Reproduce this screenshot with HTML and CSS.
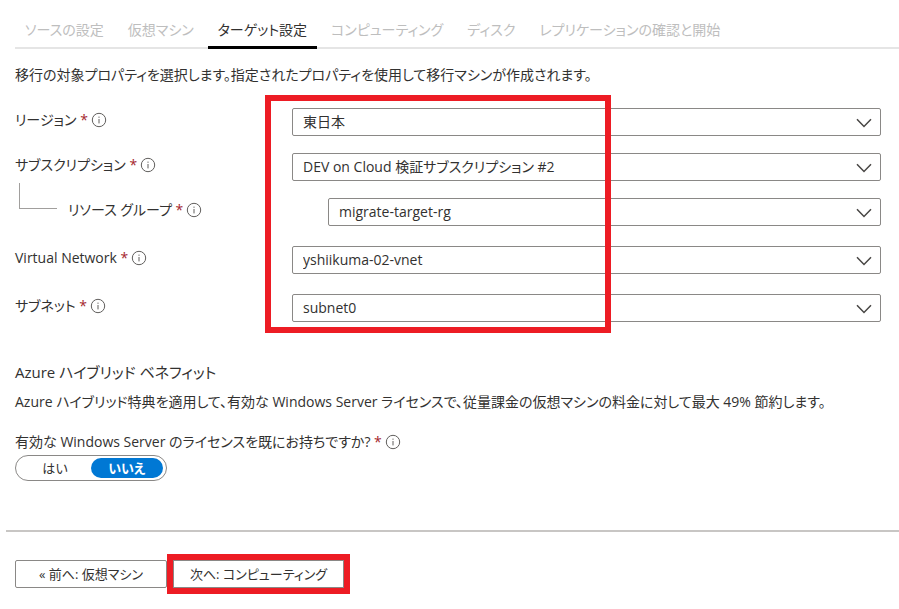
FILE: index.html
```html
<!DOCTYPE html>
<html lang="ja">
<head>
    <meta charset="UTF-8">
    <meta name="viewport" content="width=device-width, initial-scale=1.0">
    <title>ターゲット設定</title>
    <link rel="stylesheet" href="styles.css">
</head>
<body>

    <!-- Shared icons -->
    <svg class="icon-defs" aria-hidden="true">
        <symbol id="icon-info" viewBox="0 0 16 16">
            <circle cx="8" cy="8" r="6.7" fill="none" stroke="currentColor" stroke-width="1"/>
            <path d="M8 4.6v1.2M8 7v4.4" stroke="currentColor" stroke-width="1" fill="none"/>
        </symbol>
        <symbol id="icon-chevron" viewBox="0 0 16 16">
            <path d="M1 4.2l7 7.2 7-7.2" fill="none" stroke="currentColor" stroke-width="1.5"/>
        </symbol>
    </svg>

    <!-- Wizard steps -->
    <nav class="tabs">
        <button type="button" class="tab">ソースの設定</button>
        <button type="button" class="tab">仮想マシン</button>
        <button type="button" class="tab active" aria-current="step">ターゲット設定</button>
        <button type="button" class="tab">コンピューティング</button>
        <button type="button" class="tab">ディスク</button>
        <button type="button" class="tab">レプリケーションの確認と開始</button>
    </nav>

    <form class="content">
        <p class="intro">移行の対象プロパティを選択します。指定されたプロパティを使用して移行マシンが作成されます。</p>

        <!-- Target properties -->
        <div class="fields">
            <div class="field">
                <label class="field-label" for="region">リージョン <span class="required">*</span><svg class="info"><use href="#icon-info"/></svg></label>
                <div class="dropdown">
                    <select id="region"><option>東日本</option></select>
                    <svg class="chevron"><use href="#icon-chevron"/></svg>
                </div>
            </div>
            <div class="field">
                <label class="field-label" for="subscription">サブスクリプション <span class="required">*</span><svg class="info"><use href="#icon-info"/></svg></label>
                <div class="dropdown">
                    <select id="subscription"><option>DEV on Cloud 検証サブスクリプション #2</option></select>
                    <svg class="chevron"><use href="#icon-chevron"/></svg>
                </div>
            </div>
            <div class="field nested">
                <label class="field-label" for="resource-group"><span class="branch"></span>リソース グループ <span class="required">*</span><svg class="info"><use href="#icon-info"/></svg></label>
                <div class="dropdown">
                    <select id="resource-group"><option>migrate-target-rg</option></select>
                    <svg class="chevron"><use href="#icon-chevron"/></svg>
                </div>
            </div>
            <div class="field spaced">
                <label class="field-label" for="vnet">Virtual Network <span class="required">*</span><svg class="info"><use href="#icon-info"/></svg></label>
                <div class="dropdown">
                    <select id="vnet"><option>yshiikuma-02-vnet</option></select>
                    <svg class="chevron"><use href="#icon-chevron"/></svg>
                </div>
            </div>
            <div class="field spaced">
                <label class="field-label" for="subnet">サブネット <span class="required">*</span><svg class="info"><use href="#icon-info"/></svg></label>
                <div class="dropdown">
                    <select id="subnet"><option>subnet0</option></select>
                    <svg class="chevron"><use href="#icon-chevron"/></svg>
                </div>
            </div>
            <div class="callout"></div>
        </div>

        <!-- Azure Hybrid Benefit -->
        <h2>Azure ハイブリッド ベネフィット</h2>
        <p class="benefit-text">Azure ハイブリッド特典を適用して、有効な Windows Server ライセンスで、従量課金の仮想マシンの料金に対して最大 49% 節約します。</p>

        <fieldset class="license">
            <legend>有効な Windows Server のライセンスを既にお持ちですか? <span class="required">*</span><svg class="info"><use href="#icon-info"/></svg></legend>
            <div class="toggle">
                <input type="radio" name="license" id="license-yes">
                <label for="license-yes">はい</label>
                <input type="radio" name="license" id="license-no" checked>
                <label for="license-no">いいえ</label>
            </div>
        </fieldset>
    </form>

    <footer>
        <button type="button">« 前へ: 仮想マシン</button>
        <button type="button" class="next">次へ: コンピューティング</button>
    </footer>

</body>
</html>
```
FILE: styles.css
```css
* {
    box-sizing: border-box;
}
body {
    margin: 0;
    background-color: #fff;
    color: #323130;
    font-family: "Open Sans", "Noto Sans CJK JP", sans-serif;
    font-size: 14px;
    line-height: 20px;
    font-feature-settings: "palt"; /* proportional kana */
}
button,
select {
    font: inherit;
    font-feature-settings: inherit;
    color: inherit;
}
p,
h2 {
    margin: 0;
}
.icon-defs {
    display: none;
}

/* Wizard steps */
.tabs {
    display: flex;
    gap: 4px;
    margin-left: 15px;
    padding-top: 14px;
    border-bottom: 2px solid #e5e5e5;
}
.tab {
    height: 35px;
    margin-bottom: -2px;
    padding: 0 10px;
    border: none;
    border-bottom: 3px solid transparent;
    background: none;
    color: #bebebe;
    white-space: nowrap;
}
.tab.active {
    border-bottom-color: #000;
    color: #323130;
}

.content {
    padding: 0 18px 0 15px;
}
.intro {
    margin-top: 16px;
}

/* Form rows */
.fields {
    position: relative;
    margin-top: 23px;
}
.field {
    display: flex;
    margin-bottom: 17px;
}
.field.spaced {
    margin-top: 20px;
    margin-bottom: 0;
}
.field.nested {
    margin-bottom: 0;
}
.field-label {
    display: flex;
    align-items: center;
    flex: 0 0 277px;
    height: 24px;
    white-space: pre;
}
.required {
    color: #a4262c;
}
.info {
    flex: none;
    width: 16px;
    height: 16px;
    margin-left: 3px;
    color: #605e5c;
    vertical-align: -3px;
}
.branch {
    align-self: flex-start;
    width: 38px;
    height: 26px;
    margin: -15px 11px 0 4px;
    border-left: 1px solid #a19f9d;
    border-bottom: 1px solid #a19f9d;
}
.dropdown {
    position: relative;
    flex: 1;
}
.nested .dropdown {
    margin-left: 36px;
}
.dropdown select {
    display: block;
    width: 100%;
    height: 28px;
    padding: 0 36px 0 10px;
    border: 1px solid #8a8886;
    border-radius: 2px;
    background-color: #fff;
    appearance: none;
}
.chevron {
    position: absolute;
    top: 7px;
    right: 9px;
    width: 16px;
    height: 16px;
    color: #484644;
    pointer-events: none;
}

/* Red frame drawn over the chosen values */
.callout {
    position: absolute;
    top: -13px;
    bottom: -11px;
    left: 250px;
    width: 40%;
    border: 6px solid #ed1c24;
    pointer-events: none;
}

/* Hybrid benefit */
h2 {
    margin-top: 38px;
    font-size: 15px;
    font-weight: 400;
    line-height: 24px;
}
.benefit-text {
    margin-top: 8px;
}
.license {
    margin: 20px 0 0;
    padding: 0;
    border: none;
}
.license legend {
    padding: 0;
}
.toggle {
    display: inline-flex;
    margin-top: 3px;
    padding: 2px 3px;
    border: 1px solid #8a8886;
    border-radius: 13px;
    font-size: 13px;
}
.toggle input {
    position: absolute;
    opacity: 0;
}
.toggle label {
    width: 72px;
    border-radius: 10px;
    text-align: center;
}
.toggle input:checked + label {
    background-color: #0078d4;
    color: #fff;
    font-weight: 600;
}

/* Bottom bar */
footer {
    display: flex;
    gap: 6px;
    margin: 49px 0 0 6px;
    padding: 28px 9px 20px;
    border-top: 2px solid #c8c6c4;
}
footer button {
    width: 152px;
    height: 28px;
    padding: 0;
    border: 1px solid #8a8886;
    border-radius: 2px;
    background-color: #fff;
    font-size: 13px;
}
footer .next {
    width: 171px;
    border-radius: 0;
    outline: 6px solid #ed1c24;
}
```
